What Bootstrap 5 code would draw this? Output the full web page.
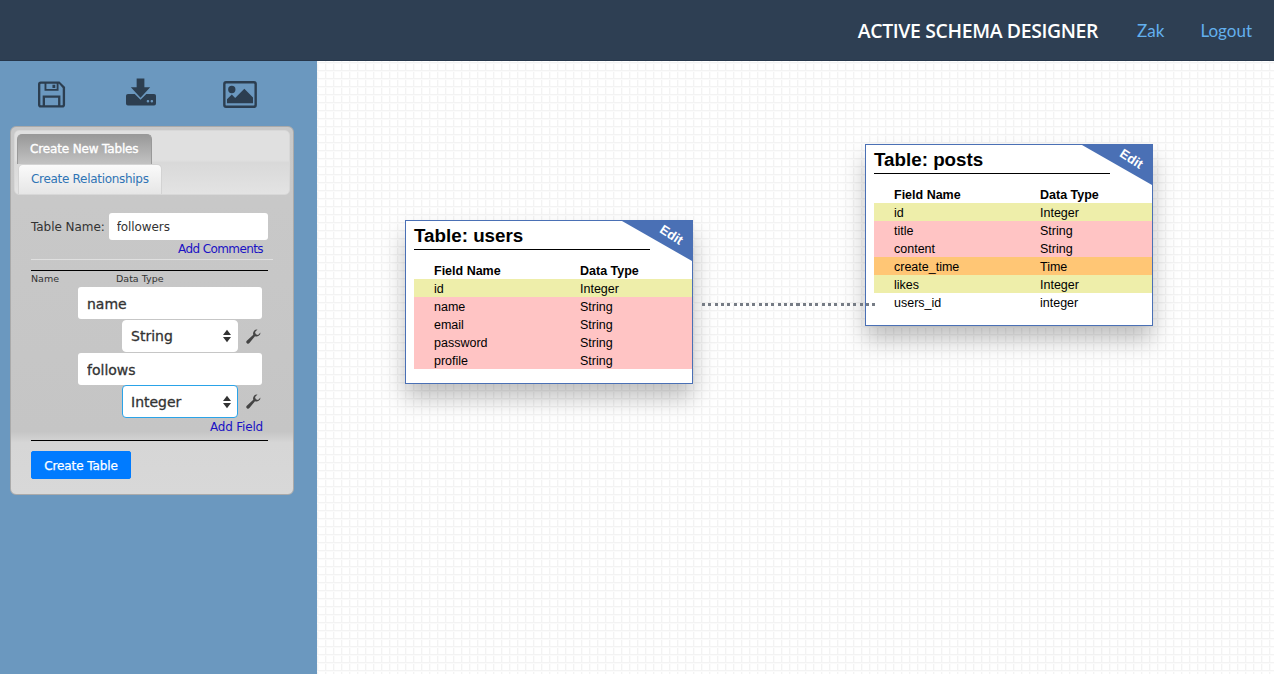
<!doctype html>
<html><head><meta charset="utf-8"><title>Active Schema Designer</title>
<link href="https://cdn.jsdelivr.net/npm/bootstrap@5.3.0/dist/css/bootstrap.min.css" rel="stylesheet">
<style>
html,body{height:674px;overflow:hidden}
body{background:#fff;font-family:"DejaVu Sans",sans-serif}
.topbar{height:61px;background:#2e3f53;border-bottom:1px solid #26364a;padding:0 22px 0 0}
.brandname{font:600 19.4px "Open Sans",sans-serif;color:#fff;margin-right:39px;letter-spacing:-.35px}
.toplink{font:400 17px Lato,sans-serif;color:#63b0ee;text-decoration:none}
.linkgap{margin-right:36px}
.shell{height:613px}
.sidepane{width:317px;background:#6b98bf;flex:none;padding:0 0 0 10px}
.iconrow{height:65px;padding:2px 0 0 28px}
.iconrow svg{display:block;fill:#2c3e50}
.panel{width:284px;height:369px;background:linear-gradient(#c9c9c9 0,#c5c5c5 83%,#d6d6d6 86%,#d8d8d8 100%);border:1px solid #aaa;border-radius:6px;padding:3px;font-size:12px;color:#333}
.tabbox{height:65px;border:1px solid #d8d8d8;border-radius:5px;background:linear-gradient(#e0e0e0 0,#e0e0e0 46%,#d9d9d9 50%,#e3e3e3 100%);padding:3px 0 0 2px}
.tabon{width:135px;height:30px;line-height:28px;background:linear-gradient(#999,#c2c2c2);border:1px solid #999;border-bottom:0;border-radius:5px 5px 0 0;color:#fff;-webkit-text-stroke:.35px #fff;padding-left:12px;font-size:12px;letter-spacing:-.15px}
.taboff{width:144px;height:30px;line-height:28px;margin-left:1px;background:linear-gradient(#fafafa,#e6e6e6);border:1px solid #d3d3d3;border-bottom:0;border-radius:5px 5px 0 0;color:#2f74b5;padding-left:12px;font-size:12px;letter-spacing:-.3px}
.formarea{padding:18px 22px 0 17px}
.namefield{width:159px;height:27px;border:0;border-radius:3px;background:#fff;padding:0 8px;font-size:12px;color:#333;letter-spacing:-.1px}
.fieldlabel{font-size:12px;letter-spacing:-.05px}
.bluelink{font-size:12px;color:#1a12c4;text-decoration:none;letter-spacing:-.2px}
.tightlink{letter-spacing:-.6px}
.linkline{width:232px}
.softrule{height:1px;background:#e0e0e0;width:242px;margin:1px 0 10px}
.hardrule{height:1px;background:#000;width:237px}
.colhead{font-size:9.5px;margin-top:1px;height:13px;line-height:13px}
.colhead span:first-child{width:85px}
.wideinput{width:184px;height:32px;margin-left:47px;border:0;border-radius:3px;background:#fff;padding:2px 9px 0;font-size:14px;color:#333;-webkit-text-stroke:.3px #333;display:block}
.firstwide{margin-top:2px}
.typerow{height:34px;margin-left:91px}
.hotrow{height:33px}
.typebox{width:116px;height:32px;border:1px solid #fff;border-radius:4px;background:#fff;padding:0 6px 0 8px;font-size:14px;color:#333;-webkit-text-stroke:.3px #333}
.typebox.hot{border-color:#2aa3e8;height:33px;padding-top:1px}
.typebox i{display:block;margin-left:auto;height:14px}
.typebox i svg{display:block}
.createbtn{--bs-btn-bg:#007bff;--bs-btn-border-color:#007bff;--bs-btn-font-size:12px;--bs-btn-border-radius:2px;width:100px;height:28px;padding:1px 0 0;margin-top:10px;-webkit-text-stroke:.25px #fff;letter-spacing:-.1px}
.canvaspane{position:relative;background-color:#fff;background-image:linear-gradient(#f3f3f3 1px,#fbfbfb 1px,#fbfbfb 2px,transparent 2px),linear-gradient(90deg,#f3f3f3 1px,#fbfbfb 1px,#fbfbfb 2px,transparent 2px);background-size:8px 8px;background-position:0 1px;min-width:0}
.tablecard{position:absolute;width:288px;background:#fff;border:1px solid #4a70b5;box-shadow:0 14px 22px rgba(0,0,0,.25);font-family:"Liberation Sans",sans-serif;color:#000;padding:0 0 14px 8px;overflow:hidden}
.tabletitle{font-size:18.8px;font-weight:700;height:29px;line-height:29px;border-bottom:1px solid #000;width:236px}
.cornerflag{position:absolute;right:0;top:0;width:70px;height:40px;background:#4a70b5;clip-path:polygon(0 0,100% 0,100% 100%)}
.editlabel{position:absolute;right:8px;top:7px;color:#fff;font-size:13px;font-weight:700;transform:rotate(33deg);line-height:14px}
.fieldrow{height:18px;line-height:20px;font-size:12.5px;padding-left:20px;display:flex}
.fieldrow span:first-child{width:146px}
.fieldhead{font-weight:700;margin-top:11px}
.kind-int{background:#eeeeaa}.kind-str{background:#ffc4c4}.kind-time{background:#ffc675}
.joinline{position:absolute;left:385px;top:242px;width:173px;height:3px;background:repeating-linear-gradient(90deg,#767c85 0,#767c85 3px,transparent 3px,transparent 6.3px)}
</style></head>
<body>
<nav class="topbar d-flex align-items-center justify-content-end">
<span class="brandname">ACTIVE SCHEMA DESIGNER</span>
<a class="toplink linkgap" href="#">Zak</a>
<a class="toplink" href="#">Logout</a>
</nav>
<div class="shell d-flex">
<aside class="sidepane">
<div class="iconrow d-flex align-items-center">
<svg width="28" height="27" viewBox="0 0 30 28"><path fill-rule="evenodd" d="M3 0h20l6 6v19a3 3 0 0 1-3 3H3a3 3 0 0 1-3-3V3a3 3 0 0 1 3-3zm0 2.500a.5.5 0 0 0-.5.500v22a.5.5 0 0 0 .5.500h2V15h19v10.500h2a.5.5 0 0 0 .5-.5V7l-4-4.500H22V10H7V2.500zM9 2.500V8h11V2.500zM15.500 3.500h3v3.500h-3zM7.500 17.500v8h14v-8z"/></svg>
<svg style="margin:0 0 5px 60px" width="30" height="28" viewBox="0 0 31 28"><path fill-rule="evenodd" d="M11 0h8v9h6L15 20 5 9h6zM2 16h7l6 6 6-6h8a2 2 0 0 1 2 2v8a2 2 0 0 1-2 2H2a2 2 0 0 1-2-2v-8a2 2 0 0 1 2-2zm22 7.500a1.300 1.300 0 1 0 0 .01zm4 0a1.300 1.300 0 1 0 0 .01z"/></svg>
<svg style="margin-left:67px" width="34" height="27" viewBox="0 0 35 28"><path fill-rule="evenodd" d="M3 0h29a3 3 0 0 1 3 3v22a3 3 0 0 1-3 3H3a3 3 0 0 1-3-3V3a3 3 0 0 1 3-3zm0 2.500a.5.5 0 0 0-.5.500v22a.5.5 0 0 0 .5.500h29a.5.5 0 0 0 .5-.5V3a.5.5 0 0 0-.5-.5zM9 5a3.800 3.800 0 1 1 0 7.600A3.800 3.800 0 0 1 9 5zM4 23v-4l5-5 3.500 3.500L22 8l9 9v6z"/></svg>
</div>
<div class="panel">
<div class="tabbox"><div class="tabon">Create New Tables</div><div class="taboff">Create Relationships</div></div>
<div class="formarea">
<div class="d-flex align-items-center gap-1"><span class="fieldlabel">Table Name:</span><input class="namefield" value="followers"></div>
<div class="text-end linkline"><a class="bluelink tightlink" href="#">Add Comments</a></div>
<div class="softrule"></div>
<div class="hardrule"></div>
<div class="colhead d-flex"><span>Name</span><span>Data Type</span></div>
<input class="wideinput firstwide" value="name">
<div class="typerow d-flex align-items-center gap-2"><div class="typebox d-flex align-items-center"><span>String</span><i><svg width="8" height="14" viewBox="0 0 9 14"><path fill="#333" d="M4.500 0 9 6H0zM0 8h9l-4.500 6z"/></svg></i></div><svg width="15" height="15" viewBox="0 0 15 15"><path fill="#444" d="M14.500 3.500a4 4 0 0 1-5.500 3.700L3.400 14a1.700 1.700 0 0 1-2.600-2.300L7.300 5.800A4 4 0 0 1 11.500 .5L9 3l.8 2.200L12 6z"/></svg></div>
<input class="wideinput" value="follows">
<div class="typerow hotrow d-flex align-items-center gap-2"><div class="typebox hot d-flex align-items-center"><span>Integer</span><i><svg width="8" height="14" viewBox="0 0 9 14"><path fill="#333" d="M4.500 0 9 6H0zM0 8h9l-4.500 6z"/></svg></i></div><svg width="15" height="15" viewBox="0 0 15 15"><path fill="#444" d="M14.500 3.500a4 4 0 0 1-5.500 3.700L3.400 14a1.700 1.700 0 0 1-2.600-2.300L7.300 5.800A4 4 0 0 1 11.500 .5L9 3l.8 2.200L12 6z"/></svg></div>
<div class="text-end linkline"><a class="bluelink" href="#">Add Field</a></div>
<div class="hardrule mt-1"></div>
<button class="btn btn-primary createbtn">Create Table</button>
</div>
</div>
</aside>
<main class="canvaspane flex-grow-1">
<section class="tablecard" style="left:88px;top:159px">
<div class="cornerflag"></div><span class="editlabel">Edit</span>
<div class="tabletitle">Table: users</div>
<div class="fieldrow fieldhead"><span>Field Name</span><span>Data Type</span></div>
<div class="fieldrow kind-int"><span>id</span><span>Integer</span></div>
<div class="fieldrow kind-str"><span>name</span><span>String</span></div>
<div class="fieldrow kind-str"><span>email</span><span>String</span></div>
<div class="fieldrow kind-str"><span>password</span><span>String</span></div>
<div class="fieldrow kind-str"><span>profile</span><span>String</span></div>
</section>
<section class="tablecard" style="left:548px;top:83px">
<div class="cornerflag"></div><span class="editlabel">Edit</span>
<div class="tabletitle">Table: posts</div>
<div class="fieldrow fieldhead"><span>Field Name</span><span>Data Type</span></div>
<div class="fieldrow kind-int"><span>id</span><span>Integer</span></div>
<div class="fieldrow kind-str"><span>title</span><span>String</span></div>
<div class="fieldrow kind-str"><span>content</span><span>String</span></div>
<div class="fieldrow kind-time"><span>create_time</span><span>Time</span></div>
<div class="fieldrow kind-int"><span>likes</span><span>Integer</span></div>
<div class="fieldrow"><span>users_id</span><span>integer</span></div>
</section>
<div class="joinline"></div>
</main>
</div>
<script src="https://cdn.jsdelivr.net/npm/bootstrap@5.3.0/dist/js/bootstrap.bundle.min.js"></script>
</body></html>
